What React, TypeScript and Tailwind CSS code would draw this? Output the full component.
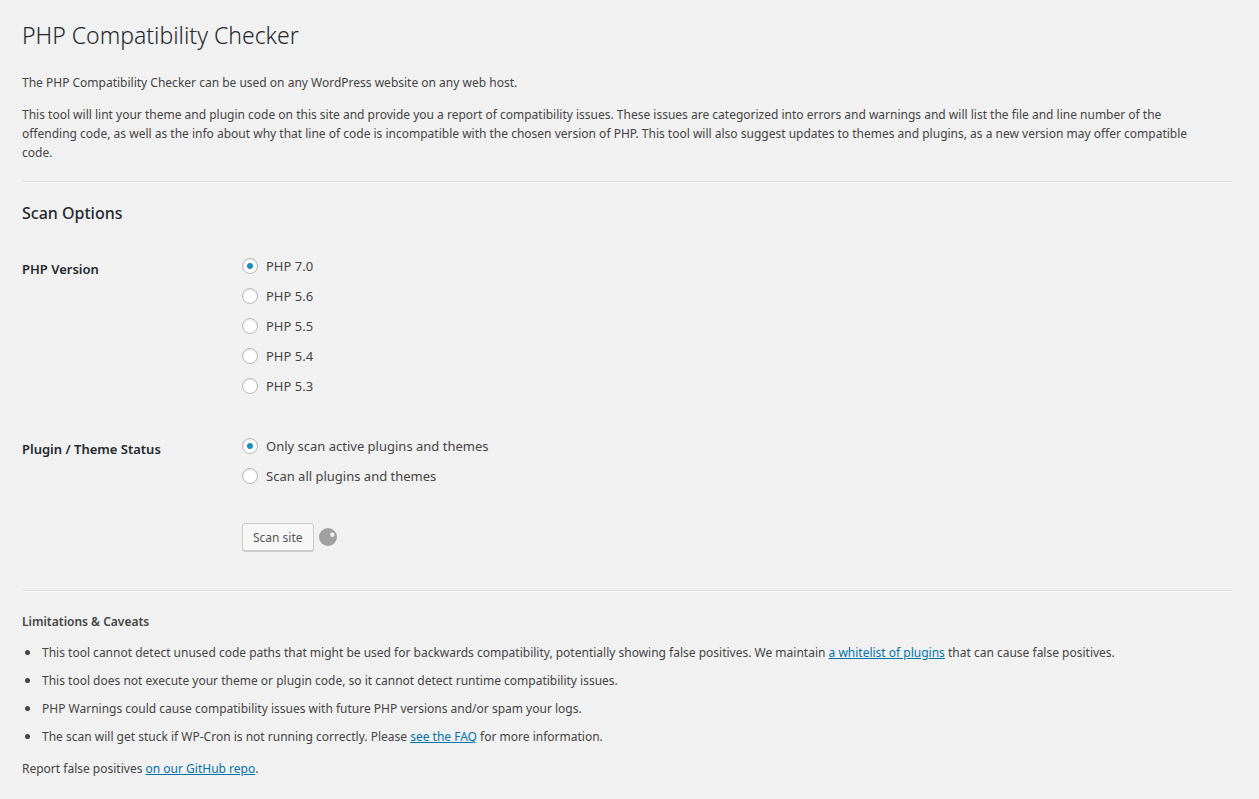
import { useState } from "react";

const versions = ["7.0", "5.6", "5.5", "5.4", "5.3"];
const statuses = ["Only scan active plugins and themes", "Scan all plugins and themes"];

const linkClass = "text-[#0073aa] underline";

function RadioGroup({ name, legend, options }: { name: string; legend: string; options: string[] }) {
  const [value, setValue] = useState(options[0]);
  return (
    <div role="radiogroup" aria-labelledby={name} className="flex">
      <h3 id={name} className="w-[220px] shrink-0 pt-[5px] text-[13px] leading-5 font-semibold text-[#23282d]">
        {legend}
      </h3>
      <div className="flex flex-col items-start">
        {options.map((option) => (
          <label key={option} className="flex h-[30px] items-center gap-2 pb-[6px] text-[13px] text-[#444444]">
            <input
              type="radio"
              name={name}
              checked={value === option}
              onChange={() => setValue(option)}
              className="grid size-4 appearance-none place-items-center rounded-full border border-[#b4b9be] bg-white shadow-[inset_0_1px_2px_rgba(0,0,0,0.1)] before:size-[6px] before:rounded-full before:content-[''] checked:before:bg-[#1e8cbe]"
            />
            {option}
          </label>
        ))}
      </div>
    </div>
  );
}

export default function App() {
  return (
    <main className="min-h-screen bg-[#f1f1f1] px-[22px] pt-5 pb-5 font-['Noto_Sans',sans-serif] text-[12px] leading-[19px] text-[#444444]">
      <div className="mr-[5px]">
        <h1 className="text-[23px] leading-[30px] font-light text-[#23282d]">PHP Compatibility Checker</h1>
        <p className="mt-[23px]">The PHP Compatibility Checker can be used on any WordPress website on any web host.</p>
        <p className="mt-[13px] pr-6">
          This tool will lint your theme and plugin code on this site and provide you a report of compatibility issues.
          These issues are categorized into errors and warnings and will list the file and line number of the offending
          code, as well as the info about why that line of code is incompatible with the chosen version of PHP. This tool
          will also suggest updates to themes and plugins, as a new version may offer compatible code.
        </p>
        <hr className="mt-[19px] h-[2px] border-t border-b border-t-[#dddddd] border-b-[#fafafa]" />
        <h2 className="mt-5 text-[16px] leading-5 font-medium text-[#23282d]">Scan Options</h2>
        <form className="mt-[31px]" onSubmit={(event) => event.preventDefault()}>
          <RadioGroup name="php-version" legend="PHP Version" options={versions.map((v) => `PHP ${v}`)} />
          <div className="mt-[30px]">
            <RadioGroup name="scan-status" legend="Plugin / Theme Status" options={statuses} />
          </div>
          <div className="mt-[29px] ml-[220px] flex items-center gap-[5px]">
            <button
              type="submit"
              className="h-7 rounded-[3px] border border-[#cccccc] bg-[#f7f7f7] px-[10px] text-[12px] text-[#555555] shadow-[0_1px_0_#cccccc]"
            >
              Scan site
            </button>
            <svg viewBox="0 0 18 18" className="size-[18px]" aria-hidden="true">
              <circle cx="9" cy="9" r="9" fill="#a0a0a0" />
              <circle cx="13.3" cy="6.8" r="2.2" fill="#f1f1f1" />
            </svg>
          </div>
        </form>
        <hr className="mt-[39px] h-[2px] border-t border-b border-t-[#dddddd] border-b-[#fafafa]" />
        <h4 className="mt-5 font-semibold">Limitations &amp; Caveats</h4>
        <ul className="mt-[11px] flex list-disc flex-col gap-2 pl-5 marker:text-[15px]">
          <li>
            This tool cannot detect unused code paths that might be used for backwards compatibility, potentially showing
            false positives. We maintain{" "}
            <a href="#whitelist" className={linkClass}>a whitelist of plugins</a> that can cause false positives.
          </li>
          <li>This tool does not execute your theme or plugin code, so it cannot detect runtime compatibility issues.</li>
          <li>PHP Warnings could cause compatibility issues with future PHP versions and/or spam your logs.</li>
          <li>
            The scan will get stuck if WP-Cron is not running correctly. Please{" "}
            <a href="#faq" className={linkClass}>see the FAQ</a> for more information.
          </li>
        </ul>
        <p className="mt-[13px]">
          Report false positives <a href="#github" className={linkClass}>on our GitHub repo</a>.
        </p>
      </div>
    </main>
  );
}
